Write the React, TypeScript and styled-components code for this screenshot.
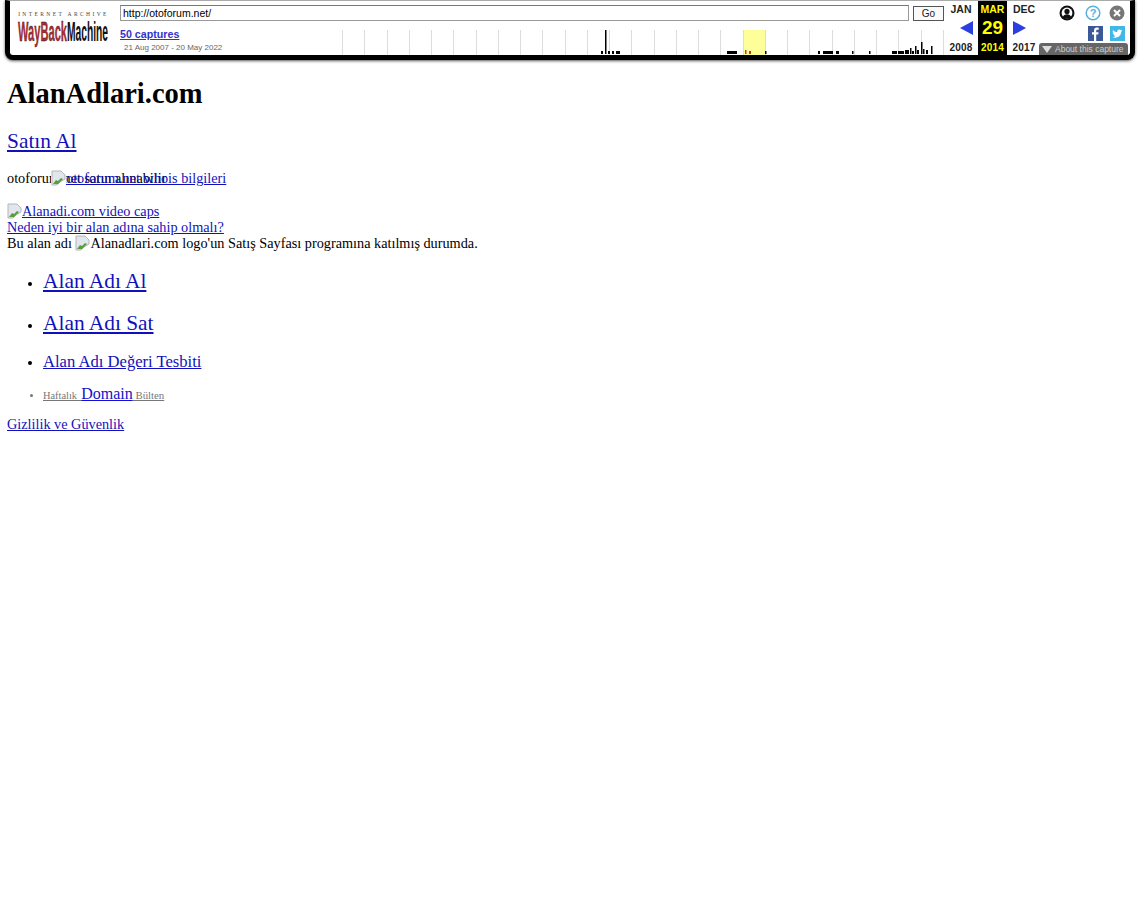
import React from 'react';
import styled, { createGlobalStyle } from 'styled-components';

const GlobalStyle = createGlobalStyle`
  html, body {
    margin: 0;
    padding: 0;
    background: #fff;
  }
  body {
    font-family: "Liberation Serif", "Times New Roman", serif;
    font-size: 16px;
    color: #000;
  }
  a {
    color: #1111bb;
    text-decoration: underline;
  }
`;

const Toolbar = styled.div`
  box-sizing: border-box;
  height: 60px;
  margin: 0 5px;
  background: #fff;
  border: 5px solid #000;
  border-top: 1px solid #aaa;
  border-radius: 0 0 8px 8px;
  box-shadow: 0 1px 3px #555;
  display: grid;
  grid-template-columns: 110px 1fr 186px;
  font-family: "Liberation Sans", Arial, sans-serif;
  position: relative;
`;

const LogoCol = styled.div`
  padding: 8px 0 0 8px;
`;

const LogoArt = styled.svg`
  display: block;
  overflow: visible;
`;

const MiddleCol = styled.div`
  display: flex;
  flex-direction: column;
  min-width: 0;
`;

const UrlRow = styled.div`
  display: flex;
  align-items: center;
  gap: 4px;
  padding-top: 4px;
`;

const UrlInput = styled.div`
  box-sizing: border-box;
  flex: 1;
  height: 16px;
  border: 1px solid #999;
  border-top-color: #777;
  font-size: 10.5px;
  line-height: 14px;
  padding-left: 2px;
  color: #000;
`;

const GoButton = styled.div`
  box-sizing: border-box;
  width: 31px;
  height: 15px;
  border: 1px solid #555;
  font-size: 10px;
  line-height: 13px;
  text-align: center;
  color: #222;
  background: #fafafa;
`;

const LowerRow = styled.div`
  flex: 1;
  display: flex;
  margin-top: 6px;
`;

const Captures = styled.div`
  width: 222px;
  flex-shrink: 0;
  display: flex;
  flex-direction: column;
`;

const CapturesLink = styled.a`
  font-size: 10.7px;
  font-weight: bold;
  color: #3333cc;
  line-height: 14px;
`;

const DateSpan = styled.div`
  font-size: 8px;
  line-height: 12px;
  color: #666;
  padding: 1px 0 0 4px;
`;

const Sparkline = styled.svg`
  display: block;
  width: 602px;
  height: 25px;
  align-self: flex-end;
`;

const RightCol = styled.div`
  display: grid;
  grid-template-columns: 34px 29px 34px 1fr;
`;

const MonthCol = styled.div<{ $active?: boolean }>`
  display: flex;
  flex-direction: column;
  align-items: center;
  height: 54px;
  background: ${p => (p.$active ? '#000' : 'transparent')};
  color: ${p => (p.$active ? '#ffff00' : '#222')};
`;

const MonthName = styled.div`
  font-size: 10.5px;
  font-weight: bold;
  line-height: 12px;
  padding-top: 2px;
`;

const DayBox = styled.div<{ $side?: 'prev' | 'next' }>`
  box-sizing: border-box;
  align-self: stretch;
  height: 24px;
  display: flex;
  align-items: center;
  justify-content: ${p => (p.$side === 'prev' ? 'flex-end' : p.$side === 'next' ? 'flex-start' : 'center')};
  padding: ${p => (p.$side === 'prev' ? '0 5px 0 0' : p.$side === 'next' ? '0 0 0 6px' : '0')};
  font-size: 19px;
  font-weight: bold;
  margin-top: 1px;
`;

const YearName = styled.div`
  font-size: 10px;
  font-weight: bold;
  line-height: 12px;
  margin-top: 2px;
  letter-spacing: 0.2px;
`;

const ToolIcons = styled.div`
  display: flex;
  flex-direction: column;
  align-items: flex-end;
  gap: 5px;
  padding: 4px 5px 0 0;

  svg {
    display: block;
  }
`;

const TopIcons = styled.div`
  display: flex;
  gap: 8px;
`;

const AccountIcon = styled.svg`
  margin-right: 2px;
`;

const ShareIcons = styled.div`
  display: flex;
  gap: 7px;
`;

const CaptureTab = styled.div`
  position: absolute;
  right: 2px;
  bottom: 0;
  width: 89px;
  height: 12px;
  border-radius: 3px 3px 0 0;
  background: #666;
  color: #ccc;
  font-size: 8.5px;
  line-height: 13px;
  display: flex;
  align-items: center;
  gap: 3px;
  padding-left: 3px;
  box-sizing: border-box;
  white-space: nowrap;
`;

const Page = styled.div`
  padding: 0 7px;
`;

const Title = styled.h1`
  font-size: 28.5px;
  line-height: 33px;
  font-weight: bold;
  margin: 17px 0 0;
`;

const BuyHeading = styled.h2`
  font-size: 21.4px;
  line-height: 26px;
  font-weight: normal;
  margin: 18px 0 0;
`;

const WhoisLine = styled.div`
  position: relative;
  height: 18px;
  font-size: 14.25px;
  line-height: 18px;
  margin-top: 15px;
  white-space: nowrap;
`;

const Overlay = styled.span`
  position: absolute;
  left: 44px;
  top: 0;
`;

const Block = styled.div`
  margin-top: 16px;
  font-size: 14.25px;
`;

const Line = styled.div`
  height: 16px;
  line-height: 16px;
  white-space: nowrap;
`;

const IconSvg = styled.svg`
  width: 15px;
  height: 16px;
  vertical-align: -3px;
  background: #fff;
`;

const Menu = styled.ul`
  margin: 18px 0 0;
  padding: 0 0 0 36px;
  list-style: disc;
`;

const MenuItem = styled.li<{ $size: number; $gap: number; $dim?: boolean }>`
  font-size: ${p => p.$size}px;
  line-height: ${p => p.$size + 3}px;
  margin-bottom: ${p => p.$gap}px;

  &::marker {
    font-size: ${p => (p.$dim ? 10 : 14)}px;
    color: ${p => (p.$dim ? '#777' : '#000')};
  }
`;

const SmallGrey = styled.a<{ $wide?: boolean }>`
  font-size: ${p => (p.$wide ? 10.8 : 10.4)}px;
  color: #777;
`;

const BulletinLink = styled.a`
  font-size: 16px;
  color: #1111cc;
`;

const WideSpace = styled.span`
  font-size: 16.6px;
`;

const FooterLink = styled.div`
  font-size: 14.25px;
  line-height: 16px;
  margin-top: 13px;
`;

const MissingImage: React.FC = () => (
  <IconSvg viewBox="0 0 15 16">
    <path d="M1 1h9l4 4v4l-5 3-3 3H1z" fill="#dfe6ee" stroke="#b5b5b5" />
    <path d="M2 14l3-4 2 1 3-3 2 1-5 5z" fill="#5a9e3a" />
  </IconSvg>
);

const ticks = Array.from({ length: 28 }, (_, i) => Math.round(i * 22.25));

// x, width, height of each capture bar, relative to the sparkline's left edge
const bars: [number, number, number, string?][] = [
  [259, 2, 3], [263, 1.5, 24], [266, 2, 3], [270, 2, 3], [274, 4, 3],
  [385, 10, 3],
  [403, 1.5, 4, '#c33'], [407, 2, 3, '#c33'], [423, 1.5, 3],
  [476, 2, 3], [481, 10, 3], [494, 3, 3],
  [510, 1.5, 3], [527, 1.5, 3],
  [550, 5, 3], [556, 6, 3], [563, 4, 4], [568, 1.5, 6], [570, 2, 3], [573, 1.5, 8],
  [575, 2, 4], [579, 1.5, 12], [581, 1.5, 5], [584, 2, 4], [589, 1.5, 8],
];

const App: React.FC = () => {
  return (
    <>
      <GlobalStyle />
      <Toolbar>
        <LogoCol>
          <LogoArt width="91" height="36" viewBox="0 0 91 36">
            <text x="45.5" y="7" textAnchor="middle" fontFamily="Liberation Serif" fontSize="5.5" letterSpacing="2.4" fill="#444">INTERNET ARCHIVE</text>
            <text x="0" y="32" textLength="49" lengthAdjust="spacingAndGlyphs" fontFamily="Liberation Sans" fontWeight="bold" fontSize="28" fill="#ab2e33" stroke="#111" strokeWidth="0.3">WayBack</text>
            <text x="49" y="32" textLength="41" lengthAdjust="spacingAndGlyphs" fontFamily="Liberation Sans" fontWeight="bold" fontSize="28" fill="#111">Machine</text>
          </LogoArt>
        </LogoCol>
        <MiddleCol>
          <UrlRow>
            <UrlInput>http://otoforum.net/</UrlInput>
            <GoButton>Go</GoButton>
          </UrlRow>
          <LowerRow>
            <Captures>
              <CapturesLink href="#">50 captures</CapturesLink>
              <DateSpan>21 Aug 2007 - 20 May 2022</DateSpan>
            </Captures>
            <Sparkline viewBox="0 0 602 25">
              <rect x="401" y="0" width="23" height="25" fill="#ffff99" />
              {ticks.map(x => (
                <rect key={x} x={x} y="0" width="1" height="25" fill="#ddd" />
              ))}
              {bars.map(([x, w, h, c], i) => (
                <rect key={i} x={x} y={24 - h} width={w} height={h} fill={c ?? '#000'} />
              ))}
            </Sparkline>
          </LowerRow>
        </MiddleCol>
        <RightCol>
          <MonthCol>
            <MonthName>JAN</MonthName>
            <DayBox $side="prev">
              <svg width="13" height="14" viewBox="0 0 13 14"><path d="M13 0v14L0 7z" fill="#2b3fe0" /></svg>
            </DayBox>
            <YearName>2008</YearName>
          </MonthCol>
          <MonthCol $active>
            <MonthName>MAR</MonthName>
            <DayBox>29</DayBox>
            <YearName>2014</YearName>
          </MonthCol>
          <MonthCol>
            <MonthName>DEC</MonthName>
            <DayBox $side="next">
              <svg width="13" height="14" viewBox="0 0 13 14"><path d="M0 0v14l13-7z" fill="#2b3fe0" /></svg>
            </DayBox>
            <YearName>2017</YearName>
          </MonthCol>
          <ToolIcons>
            <TopIcons>
              <AccountIcon width="16" height="16" viewBox="0 0 16 16">
                <circle cx="8" cy="8" r="7.5" fill="#111" />
                <circle cx="8" cy="8" r="5.4" fill="#fff" />
                <circle cx="8" cy="6.4" r="2.6" fill="#111" />
                <path d="M3.6 12.6c.8-2.4 2.4-3.4 4.4-3.4s3.6 1 4.4 3.4C11 14 5 14 3.6 12.6z" fill="#111" />
              </AccountIcon>
              <svg width="16" height="16" viewBox="0 0 16 16">
                <circle cx="8" cy="8" r="6.8" fill="#fff" stroke="#55b2e0" strokeWidth="1.5" />
                <text x="8" y="12" textAnchor="middle" fontFamily="Liberation Sans" fontSize="11" fontWeight="bold" fill="#55b2e0">?</text>
              </svg>
              <svg width="16" height="16" viewBox="0 0 16 16">
                <circle cx="8" cy="8" r="7.5" fill="#777" />
                <path d="M5 5l6 6M11 5l-6 6" stroke="#fff" strokeWidth="2" />
              </svg>
            </TopIcons>
            <ShareIcons>
              <svg width="15" height="15" viewBox="0 0 15 15">
                <rect width="15" height="15" fill="#3b5998" />
                <path d="M8.2 15V8.6h2l.4-2.3H8.2V5c0-.8.3-1.2 1.2-1.2h1.3V1.700c-.5-.1-1.100-.1-1.700-.1-1.900 0-3 1.100-3 3.100v1.600H4v2.300h2V15z" fill="#fff" />
              </svg>
              <svg width="15" height="15" viewBox="0 0 15 15">
                <rect width="15" height="15" fill="#41b7e8" />
                <path d="M12.4 4.600c-.4.200-.8.300-1.200.3.400-.3.800-.7.900-1.200-.4.200-.9.400-1.300.5a2.100 2.100 0 0 0-3.600 1.900C5.500 6 4 5.200 3 3.900c-.6 1-.3 2.200.6 2.800-.3 0-.6-.1-.9-.3 0 1 .7 1.900 1.700 2.100-.3.100-.6.100-.9 0 .3.900 1.100 1.400 2 1.500-.9.700-2 1-3.100.9 2.900 1.800 8.600.7 8.900-5.300.4-.3.800-.6 1.100-1z" fill="#fff" />
              </svg>
            </ShareIcons>
          </ToolIcons>
        </RightCol>
        <CaptureTab>
          <svg width="10" height="7" viewBox="0 0 10 7"><path d="M0 0h10L5 7z" fill="#ddd" /></svg>
          About this capture
        </CaptureTab>
      </Toolbar>

      <Page>
        <Title>AlanAdlari.com</Title>
        <BuyHeading><a href="#">Satın Al</a></BuyHeading>
        <WhoisLine>
          otoforum.net satın alınabilir
          <Overlay>
            <a href="#"><MissingImage />otoforum.net whois bilgileri</a>
          </Overlay>
        </WhoisLine>
        <Block>
          <Line>
            <a href="#"><MissingImage />Alanadi.com video caps</a>
          </Line>
          <Line><a href="#">Neden iyi bir alan adına sahip olmalı?</a></Line>
          <Line>
            Bu alan adı <MissingImage />Alanadlari.com logo'un Satış Sayfası programına katılmış durumda.
          </Line>
        </Block>
        <Menu>
          <MenuItem $size={21.4} $gap={18}><a href="#">Alan Adı Al</a></MenuItem>
          <MenuItem $size={21.4} $gap={16}><a href="#">Alan Adı Sat</a></MenuItem>
          <MenuItem $size={16.6} $gap={16}><a href="#">Alan Adı Değeri Tesbiti</a></MenuItem>
          <MenuItem $size={10.4} $gap={0} $dim>
            <SmallGrey href="#">Haftalık<WideSpace> </WideSpace></SmallGrey>
            <BulletinLink href="#">Domain</BulletinLink>
            <SmallGrey href="#" $wide> Bülten</SmallGrey>
          </MenuItem>
        </Menu>
        <FooterLink><a href="#">Gizlilik ve Güvenlik</a></FooterLink>
      </Page>
    </>
  );
};

export default App;
